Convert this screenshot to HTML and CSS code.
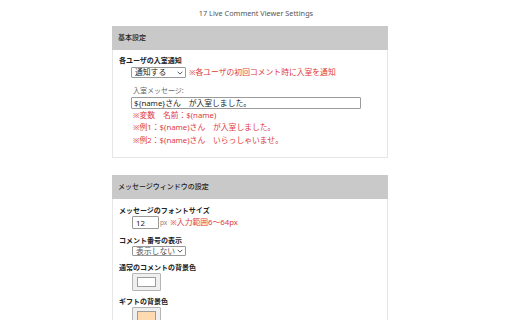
FILE: index.html
```html
<!DOCTYPE html>
<html lang="ja">
<head>
<meta charset="utf-8">
<title>17 Live Comment Viewer Settings</title>
<link rel="stylesheet" href="styles.css">
</head>
<body>
<h1 class="title">17 Live Comment Viewer Settings</h1>

<section class="panel">
  <div class="panel-head">基本設定</div>
  <div class="panel-body">
    <div class="field">
      <div class="label">各ユーザの入室通知</div>
      <div class="ctrl">
        <span class="select-wrap sel-notify">
          <select class="select"><option>通知する</option></select>
          <svg class="chev" viewBox="0 0 8 5" width="6" height="4"><path d="M0.8 0.8 L4 4 L7.2 0.8" fill="none" stroke="#333" stroke-width="1.1"/></svg>
        </span>
        <span class="note">※各ユーザの初回コメント時に入室を通知</span>
      </div>
      <div class="sub">
        <div class="sublabel">入室メッセージ:</div>
        <input class="text-input" type="text" value="${name}さん　が入室しました。">
        <div class="notes">
          <div class="note">※変数　名前：$(name)</div>
          <div class="note">※例1：$(name)さん　が入室しました。</div>
          <div class="note">※例2：$(name)さん　いらっしゃいませ。</div>
        </div>
      </div>
    </div>
  </div>
</section>

<section class="panel panel-2">
  <div class="panel-head">メッセージウィンドウの設定</div>
  <div class="panel-body">
    <div class="field">
      <div class="label">メッセージのフォントサイズ</div>
      <div class="ctrl">
        <input class="num-input" type="text" value="12">
        <span class="unit">px</span>
        <span class="note">※入力範囲6〜64px</span>
      </div>
    </div>
    <div class="field">
      <div class="label">コメント番号の表示</div>
      <div class="ctrl">
        <span class="select-wrap sel-num">
          <select class="select select-dim"><option>表示しない</option></select>
          <svg class="chev" viewBox="0 0 8 5" width="6" height="4"><path d="M0.8 0.8 L4 4 L7.2 0.8" fill="none" stroke="#333" stroke-width="1.1"/></svg>
        </span>
      </div>
    </div>
    <div class="field">
      <div class="label">通常のコメントの背景色</div>
      <div class="ctrl">
        <div class="swatch"><div class="swatch-color swatch-white"></div></div>
      </div>
    </div>
    <div class="field">
      <div class="label">ギフトの背景色</div>
      <div class="ctrl">
        <div class="swatch"><div class="swatch-color swatch-peach"></div></div>
      </div>
    </div>
  </div>
</section>
</body>
</html>
```

FILE: styles.css
```css
html, body {
  margin: 0;
  padding: 0;
  background: #ffffff;
}
body {
  font-family: "Noto Sans", "Noto Sans CJK JP", sans-serif;
  color: #222;
  font-size: 7px;
  line-height: 11px;
}
.title {
  margin: 0;
  padding-top: 8px;
  height: 18px;
  font-size: 7.3px;
  line-height: 11px;
  font-weight: normal;
  text-align: center;
  color: #555;
}
.panel {
  margin-left: 112px;
  width: 276px;
  box-sizing: border-box;
  border: 1px solid #e6e6e6;
  border-top: none;
}
.panel-2 {
  margin-top: 17px;
}
.panel-head {
  background: #c9c9c9;
  height: 24px;
  line-height: 24px;
  padding-left: 6px;
  font-size: 7px;
  font-weight: 500;
  color: #222;
  margin: 0 -1px;
}
.panel-body {
  padding: 5px 6px 11px 6px;
}
.panel-2 .panel-body {
  padding-top: 0;
}
.field {
  margin-top: 0;
}
.panel-2 .field {
  margin-top: 6px;
}
.panel-2 .field:last-child {
  margin-top: 5px;
}
.label {
  font-weight: bold;
  font-size: 7px;
  line-height: 11px;
  height: 11px;
  color: #222;
}
.ctrl {
  display: flex;
  align-items: center;
  gap: 3px;
  padding-left: 12px;
}
.note {
  color: #e03a3a;
  font-size: 7.8px;
  line-height: 12.5px;
}
.select-wrap {
  position: relative;
  display: inline-block;
  height: 11px;
}
.select {
  appearance: none;
  -webkit-appearance: none;
  margin: 0;
  height: 11px;
  box-sizing: border-box;
  border: 1px solid #9a9a9a;
  border-radius: 1px;
  background: #fff;
  font-family: "Noto Sans", "Noto Sans CJK JP", sans-serif;
  font-size: 7.8px;
  line-height: 9px;
  padding: 0 0 0 3px;
  color: #222;
}
.sel-notify .select {
  width: 55px;
}
.sel-num {
  margin-left: 1px;
  height: 10px;
}
.sel-num .select {
  width: 54px;
  height: 10px;
  line-height: 8px;
}
.select-dim {
  color: #555;
}
.chev {
  position: absolute;
  right: 3px;
  top: 4px;
}
.sel-num .chev {
  top: 3px;
}
.sub {
  padding-left: 12px;
  margin-top: 6px;
}
.sublabel {
  padding-left: 2px;
  color: #666;
  font-size: 7px;
  line-height: 11px;
  height: 11px;
}
.text-input {
  display: block;
  margin: 1px 0 0 0;
  width: 230px;
  height: 12px;
  box-sizing: border-box;
  border: 1px solid #9a9a9a;
  border-radius: 1px;
  padding: 0 2px;
  font-family: "Noto Sans", "Noto Sans CJK JP", sans-serif;
  font-size: 7.8px;
  color: #222;
}
.notes {
  padding-left: 2px;
}
.num-input {
  margin: 0 0 0 1px;
  width: 27px;
  height: 13px;
  box-sizing: border-box;
  border: 1px solid #9a9a9a;
  border-radius: 1px;
  padding: 0 3px;
  font-family: "Noto Sans", "Noto Sans CJK JP", sans-serif;
  font-size: 7.8px;
  color: #222;
}
.unit {
  color: #888;
  font-size: 6.5px;
  margin-left: -2px;
}
.swatch {
  margin-left: 1px;
  width: 29px;
  height: 18px;
  box-sizing: border-box;
  background: #efefef;
  border: 1px solid #b5b5b5;
  border-radius: 1px;
  padding: 3px 4px;
}
.swatch-color {
  width: 100%;
  height: 100%;
  box-sizing: border-box;
  border: 1px solid #9c9c9c;
}
.swatch-white {
  background: #ffffff;
}
.swatch-peach {
  background: #ffd9b0;
}
```
